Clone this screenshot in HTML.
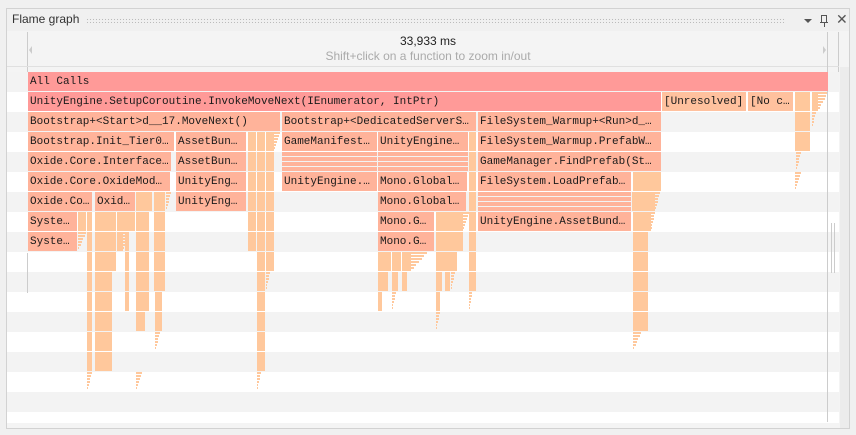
<!DOCTYPE html>
<html><head><meta charset="utf-8"><style>
*{margin:0;padding:0;box-sizing:border-box}
body{width:856px;height:435px;background:#f0f0f0;position:relative;overflow:hidden;font-family:"Liberation Sans",sans-serif}
.a{position:absolute}
.b{position:absolute;height:19px;font-family:"Liberation Mono","DejaVu Sans Mono",monospace;font-size:11px;line-height:20px;color:#1a1a1a;padding-left:2px;white-space:nowrap;overflow:hidden}
.r{background:#ff9a98}.s{background:#ffb39a}.p{background:#ffc89c}.u{background:#ffc19e}
</style></head><body>
<div class="a" style="left:6px;top:8px;width:844px;height:421px;border:1px solid #d2d2d2;background:#f4f4f4"></div>
<div class="a" style="left:7px;top:9px;width:842px;height:22px;background:#f0f0f0"></div>
<div class="a" style="left:12px;top:12px;font-size:12px;color:#333">Flame graph</div>
<div class="a" style="left:86px;top:18px;width:700px;height:5px;background-image:radial-gradient(#bbb 0.6px,transparent 0.8px);background-size:3px 3px"></div>
<div class="a" style="left:804px;top:19px;width:0;height:0;border-left:4px solid transparent;border-right:4px solid transparent;border-top:4px solid #555"></div>
<div class="a" style="left:821px;top:15px;width:6px;height:8px;border:1px solid #555;border-bottom:none"></div>
<div class="a" style="left:820px;top:22px;width:8px;height:1px;background:#555"></div>
<div class="a" style="left:824px;top:23px;width:1px;height:4px;background:#555"></div>
<div class="a" style="left:836px;top:11px;font-size:14px;color:#555">✕</div>
<div class="a" style="left:27px;top:32px;width:1px;height:40px;background:#ccc"></div>
<div class="a" style="left:838px;top:32px;width:1px;height:40px;background:#ccc"></div>
<div class="a" style="left:7px;top:66px;width:832px;height:1px;background:#e0e0e0"></div>
<div class="a" style="left:29px;top:46px;border-top:4px solid transparent;border-bottom:4px solid transparent;border-right:3px solid #ccc"></div>
<div class="a" style="left:823px;top:46px;border-top:4px solid transparent;border-bottom:4px solid transparent;border-left:3px solid #ccc"></div>
<div class="a" style="left:0;width:856px;top:34px;text-align:center;font-size:12px;color:#222">33,933 ms</div>
<div class="a" style="left:0;width:856px;top:49px;text-align:center;font-size:12px;color:#aaa">Shift+click on a function to zoom in/out</div>
<div id="rows"></div>
<div class="a" style="left:27px;top:253px;width:1px;height:40px;background:#ccc"></div>
<div class="a" style="left:827px;top:32px;width:1px;height:390px;background:#ccc"></div>
<div class="a" style="left:840px;top:67px;width:9px;height:361px;background:#ececec"></div>
<div class="a" style="left:831px;top:223px;width:1px;height:50px;background:#ccc"></div>
<div class="a" style="left:834px;top:223px;width:1px;height:50px;background:#ccc"></div>
<div class="b r" style="left:28px;top:72px;width:800px">All Calls</div>
<div class="b r" style="left:28px;top:92px;width:633px">UnityEngine.SetupCoroutine.InvokeMoveNext(IEnumerator, IntPtr)</div>
<div class="b u" style="left:662px;top:92px;width:84px">[Unresolved]</div>
<div class="b u" style="left:748px;top:92px;width:45px">[No c…</div>
<div class="b s" style="left:28px;top:112px;width:252px">Bootstrap+&lt;Start&gt;d__17.MoveNext()</div>
<div class="b s" style="left:282px;top:112px;width:194px">Bootstrap+&lt;DedicatedServerS…</div>
<div class="b s" style="left:478px;top:112px;width:183px">FileSystem_Warmup+&lt;Run&gt;d_…</div>
<div class="b s" style="left:28px;top:132px;width:146px">Bootstrap.Init_Tier0…</div>
<div class="b s" style="left:176px;top:132px;width:70px">AssetBun…</div>
<div class="b s" style="left:282px;top:132px;width:95px">GameManifest…</div>
<div class="b s" style="left:378px;top:132px;width:90px">UnityEngine…</div>
<div class="b s" style="left:478px;top:132px;width:183px">FileSystem_Warmup.PrefabW…</div>
<div class="b s" style="left:28px;top:152px;width:143px">Oxide.Core.Interface…</div>
<div class="b s" style="left:176px;top:152px;width:70px">AssetBun…</div>
<div class="b s" style="left:478px;top:152px;width:183px">GameManager.FindPrefab(St…</div>
<div class="b s" style="left:28px;top:172px;width:142px">Oxide.Core.OxideMod…</div>
<div class="b s" style="left:176px;top:172px;width:70px">UnityEng…</div>
<div class="b s" style="left:282px;top:172px;width:95px">UnityEngine.…</div>
<div class="b s" style="left:378px;top:172px;width:89px">Mono.Global…</div>
<div class="b s" style="left:478px;top:172px;width:153px">FileSystem.LoadPrefab…</div>
<div class="b s" style="left:28px;top:192px;width:64px">Oxide.Co…</div>
<div class="b s" style="left:95px;top:192px;width:40px">Oxid…</div>
<div class="b s" style="left:176px;top:192px;width:70px">UnityEng…</div>
<div class="b s" style="left:378px;top:192px;width:88px">Mono.Global…</div>
<div class="b s" style="left:28px;top:212px;width:49px">Syste…</div>
<div class="b s" style="left:378px;top:212px;width:56px">Mono.G…</div>
<div class="b s" style="left:478px;top:212px;width:153px">UnityEngine.AssetBund…</div>
<div class="b s" style="left:28px;top:232px;width:49px">Syste…</div>
<div class="b s" style="left:378px;top:232px;width:56px">Mono.G…</div>
<script>
var R=document.getElementById('rows'),h='';
for(var i=0;i<18;i++){var y=72+i*20;if(y>422)break;h+='<div class="a" style="left:7px;top:'+y+'px;width:832px;height:'+Math.min(20,423-y)+'px;background:'+(i%2?'#fff':'#f3f3f3')+'"></div>';}
function p(x,y,w,hh,c){h+='<div class="a" style="left:'+x+'px;top:'+y+'px;width:'+w+'px;height:'+(hh||19)+'px;background:'+(c||'#ffc89c')+'"></div>';}
[[282,377],[378,468]].forEach(function(a){for(var k=0;k<4;k++)p(a[0],152+k*5,a[1]-a[0],4,'#ffb39a');});
for(var k=0;k<4;k++)p(478,192+k*5,153,4,'#ffb39a');
var c=[[795,15,1,3],[812,6,1,1],[248,8,3,8],[257,8,3,14],[266,8,3,9],[469,7,3,10],[633,28,5,5],[632,23,6,6],[633,18,7,7],[633,15,8,12],
[136,16,6,6],[154,11,6,10],[155,7,11,12],[78,8,7,7],[87,5,7,14],[95,21,7,9],[95,17,10,14],[117,18,7,7],[117,6,8,8],[136,13,7,11],[136,9,12,12],[125,4,8,11],
[436,27,7,8],[436,21,9,9],[436,6,10,10],[445,5,10,10],[378,13,9,9],[392,9,9,9],[402,9,9,9],[378,10,10,10],[392,6,10,10],[402,5,10,10],[378,4,11,11],[436,4,11,11]];
c.forEach(function(a){for(var r=a[2];r<=a[3];r++)p(a[0],72+r*20,a[1]);});
function tri(x,y,n,w){for(var k=0;k<n;k++)p(x,y+k*3,Math.max(1,w-k*w/n),2);}
tri(818,92,6,10);tri(812,112,5,4);tri(795,172,6,6);tri(274,132,6,6);tri(166,192,6,5);tri(78,232,6,8);tri(123,232,6,6);tri(136,252,5,8);tri(87,372,6,5);tri(136,372,6,6);tri(155,332,6,5);tri(411,252,6,16);tri(463,212,6,6);tri(392,292,6,4);tri(436,312,6,4);tri(451,272,6,4);tri(469,292,6,3);tri(655,192,6,5);tri(651,212,6,4);tri(633,332,6,8);tri(257,372,6,4);tri(266,272,6,4);tri(796,152,6,5);
R.innerHTML=h;
</script>
</body></html>
